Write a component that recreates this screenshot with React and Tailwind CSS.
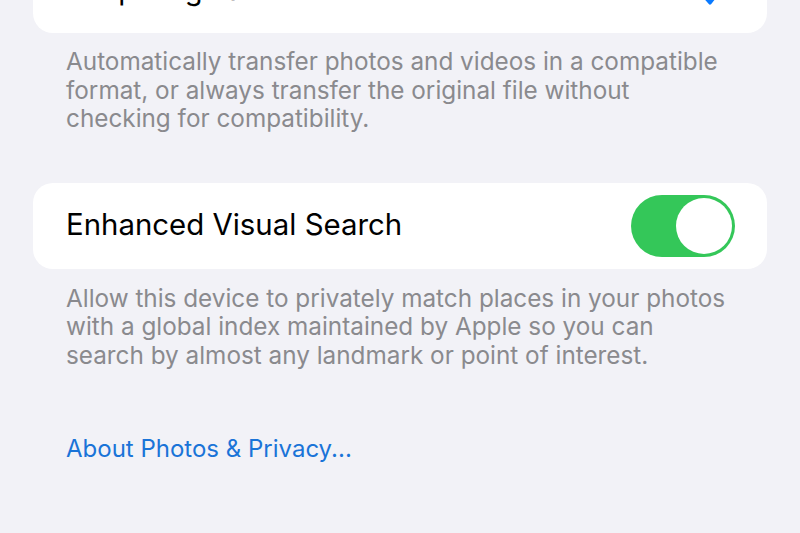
import React from "react";

const font = { fontFamily: "Inter, 'Liberation Sans', sans-serif" };

const Footer = ({ children, className = "" }) => (
  <p className={`px-[66px] text-[24.3px] leading-[28.5px] text-[#8a8a8e] ${className}`}>
    {children}
  </p>
);

export default function App() {
  return (
    <div
      className="h-[533px] w-[800px] overflow-hidden bg-[#f2f2f7]"
      style={font}
    >
      {/* Keep Originals (cut off) */}
      <div className="mx-[33px] -mt-[53px] flex h-[86px] items-center justify-between rounded-[20px] bg-white pl-[33px] pr-[40px]">
        <span className="text-[29px] text-black">Keep Originals</span>
        <svg width="26" height="24" viewBox="0 0 26 24" className="mt-[8px]">
          <path
            d="M2 13 L9 21 L24 2"
            fill="none"
            stroke="#0a7aff"
            strokeWidth="3.2"
            strokeLinecap="round"
            strokeLinejoin="round"
          />
        </svg>
      </div>

      <Footer className="mt-[14px]">
        Automatically transfer photos and videos in a compatible
        <br />
        format, or always transfer the original file without
        <br />
        checking for compatibility.
      </Footer>

      {/* Enhanced Visual Search */}
      <div className="mx-[33px] mt-[50px] flex h-[86px] items-center justify-between rounded-[20px] bg-white pl-[33px] pr-[32px]">
        <span className="text-[29.4px] text-black">Enhanced Visual Search</span>
        <div className="flex h-[62px] w-[104px] items-center justify-end rounded-full bg-[#34c759] p-[3px]">
          <div className="h-[56px] w-[56px] rounded-full bg-white" />
        </div>
      </div>

      <Footer className="mt-[15px]">
        Allow this device to privately match places in your photos
        <br />
        with a global index maintained by Apple so you can
        <br />
        search by almost any landmark or point of interest.
      </Footer>

      <p className="mt-[66px] px-[66px] text-[24px] leading-[28px] text-[#1a74d8]">
        About Photos &amp; Privacy...
      </p>
    </div>
  );
}
